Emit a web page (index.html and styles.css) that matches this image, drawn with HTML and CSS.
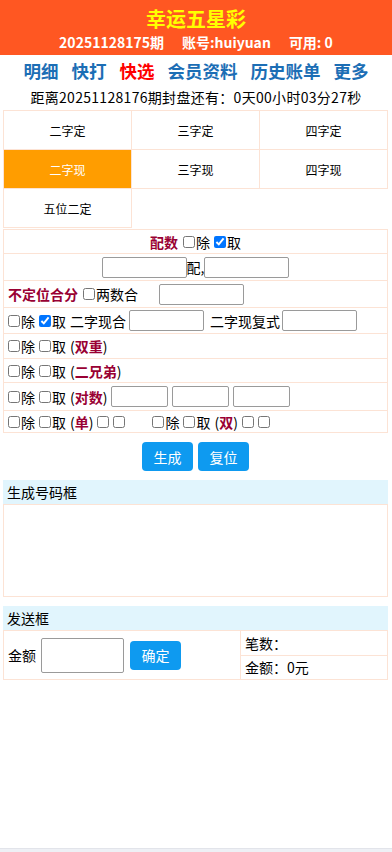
FILE: index.html
```html
<!DOCTYPE html>
<html lang="zh-CN">
<head>
<meta charset="utf-8">
<meta name="viewport" content="width=device-width, initial-scale=1">
<title>幸运五星彩</title>
<link rel="stylesheet" href="styles.css">
</head>
<body>
<header class="top">
  <div class="title">幸运五星彩</div>
  <div class="info"><span>20251128175期</span><span>账号:huiyuan</span><span>可用: 0</span></div>
</header>
<nav class="nav">
  <a>明细</a><a>快打</a><a class="on">快选</a><a>会员资料</a><a>历史账单</a><a>更多</a>
</nav>
<div class="count">距离20251128176期封盘还有：0天00小时03分27秒</div>

<div class="wrap">
  <div class="tabs">
    <div class="tab">二字定</div>
    <div class="tab">三字定</div>
    <div class="tab">四字定</div>
    <div class="tab active">二字现</div>
    <div class="tab">三字现</div>
    <div class="tab">四字现</div>
    <div class="tab last">五位二定</div>
  </div>

  <div class="form">
    <div class="row center h24"><b class="lab">配数</b><label class="g5"><input type="checkbox">除</label><label class="g4"><input type="checkbox" checked>取</label></div>
    <div class="row center h27"><input class="txt w85" type="text">配,<input class="txt w85" type="text"></div>
    <div class="row h27"><b class="lab">不定位合分</b><label class="g5"><input type="checkbox">两数合</label><input class="txt w85 ml21" type="text"></div>
    <div class="row h26"><label><input type="checkbox">除</label><label class="g4"><input type="checkbox" checked>取</label><span class="g4">二字现合</span><input class="txt w75 g3" type="text"><span class="g6">二字现复式</span><input class="txt w75 g2" type="text"></div>
    <div class="row h25"><label><input type="checkbox">除</label><label class="g4"><input type="checkbox">取</label><span class="g4">(<b class="lab">双重</b>)</span></div>
    <div class="row h24"><label><input type="checkbox">除</label><label class="g4"><input type="checkbox">取</label><span class="g4">(<b class="lab">二兄弟</b>)</span></div>
    <div class="row h28"><label><input type="checkbox">除</label><label class="g4"><input type="checkbox">取</label><span class="g4">(<b class="lab">对数</b>)</span><input class="txt w57 g4" type="text"><input class="txt w57 g4" type="text"><input class="txt w57 g4" type="text"></div>
    <div class="row h22"><label><input type="checkbox">除</label><label class="g4"><input type="checkbox">取</label><span class="g4">(<b class="lab">单</b>)</span><input type="checkbox" class="cb g4"><input type="checkbox" class="cb g3"><label class="g26"><input type="checkbox">除</label><label class="g4"><input type="checkbox">取</label><span class="g4">(<b class="lab">双</b>)</span><input type="checkbox" class="cb g4"><input type="checkbox" class="cb g3"></div>
  </div>

  <div class="btns"><button class="btn">生成</button><button class="btn">复位</button></div>

  <div class="boxhead">生成号码框</div>
  <div class="gbox"></div>

  <div class="boxhead">发送框</div>
  <div class="sendt">
    <div class="sleft">金额<input class="txt amt" type="text"><button class="btn ok">确定</button></div>
    <div class="sright">
      <div class="sr">笔数：</div>
      <div class="sr">金额：0元</div>
    </div>
  </div>
</div>
<div class="foot"></div>
</body>
</html>
```

FILE: styles.css
```css
* { box-sizing: border-box; }
html, body { margin: 0; padding: 0; background: #fff; }
body {
  font-family: "Noto Sans CJK SC", "Noto Sans", sans-serif;
  font-size: 14px;
  color: #000;
}
.top {
  background: #ff5722;
  height: 55px;
  text-align: center;
  padding-top: 6px;
}
.title {
  color: #ffff00;
  font-weight: bold;
  font-size: 20px;
  line-height: 26px;
}
.info {
  color: #fff;
  font-weight: bold;
  font-size: 14px;
  line-height: 20px;
  display: flex;
  justify-content: center;
  gap: 18px;
}
.nav {
  height: 30px;
  display: flex;
  justify-content: center;
  align-items: center;
  gap: 13px;
  padding-top: 1px;
}
.nav a {
  color: #1c6eb5;
  font-weight: bold;
  font-size: 17.5px;
  line-height: 24px;
}
.nav a.on { color: #ff0000; }
.count {
  text-align: center;
  font-size: 14px;
  letter-spacing: 0.3px;
  height: 25px;
  line-height: 24px;
}
.wrap {
  margin: 0 4px 0 3px;
}
.tabs {
  display: grid;
  grid-template-columns: 128px 128px 1fr;
  grid-auto-rows: 39px;
  border-top: 1px solid #fce3d5;
  border-left: 1px solid #fce3d5;
}
.tab {
  border-right: 1px solid #fce3d5;
  border-bottom: 1px solid #fce3d5;
  display: flex;
  align-items: center;
  justify-content: center;
  font-size: 12px;
}
.tab.active {
  background: #ff9d00;
  color: #fff;
}
.form {
  margin-top: 1px;
  border: 1px solid #fce3d5;
  border-bottom: none;
}
.row {
  display: flex;
  align-items: center;
  padding: 0 4px;
  line-height: 20px;
  border-bottom: 1px solid #fce3d5;
  white-space: nowrap;
}
.h22 { height: 22px; }
.h24 { height: 24px; }
.h25 { height: 25px; }
.h26 { height: 26px; }
.h27 { height: 27px; }
.h28 { height: 28px; }
.row.center { justify-content: center; }
.lab { color: #990033; font-weight: bold; }
label { display: inline-flex; align-items: center; }
:where(input[type="checkbox"]) {
  margin: 0 1px 0 0;
  width: 12px;
  height: 12px;
}
.g2 { margin-left: 2px; }
.g3 { margin-left: 3px; }
.g4 { margin-left: 4px; }
.g5 { margin-left: 5px; }
.g6 { margin-left: 6px; }
.g26 { margin-left: 26px; }
.txt {
  height: 21px;
  border: 1px solid #9a9a9a;
  border-radius: 2px;
  padding: 0 2px;
  font-size: 13px;
  font-family: inherit;
  background: #fff;
}
.w85 { width: 85px; }
.w75 { width: 75px; }
.w57 { width: 57px; }
.ml21 { margin-left: 21px; }
.btns {
  display: flex;
  justify-content: center;
  gap: 5px;
  margin-top: 9px;
}
.btn {
  background: #0e9af0;
  color: #fff;
  border: none;
  border-radius: 4px;
  width: 51px;
  height: 29px;
  font-size: 14px;
  font-family: inherit;
  padding: 0;
}
.boxhead {
  margin-top: 9px;
  background: #e1f5fd;
  height: 24px;
  line-height: 24px;
  padding-left: 4px;
  font-size: 14px;
}
.gbox {
  height: 93px;
  border: 1px solid #fce3d5;
}
.sendt {
  display: flex;
  border: 1px solid #fce3d5;
  height: 50px;
}
.sleft {
  width: 237px;
  display: flex;
  align-items: center;
  padding-left: 4px;
  border-right: 1px solid #fce3d5;
}
.amt {
  width: 83px;
  height: 35px;
  margin-left: 5px;
}
.btn.ok { margin-left: 6px; }
.sright {
  flex: 1;
  display: flex;
  flex-direction: column;
}
.sr {
  flex: 1;
  display: flex;
  align-items: center;
  padding-left: 4px;
}
.sr + .sr { border-top: 1px solid #fce3d5; }
.foot {
  position: fixed;
  left: 0;
  right: 0;
  bottom: 0;
  height: 4px;
  background: #eef0f5;
  border-top: 1px solid #e2e4ea;
}
```
